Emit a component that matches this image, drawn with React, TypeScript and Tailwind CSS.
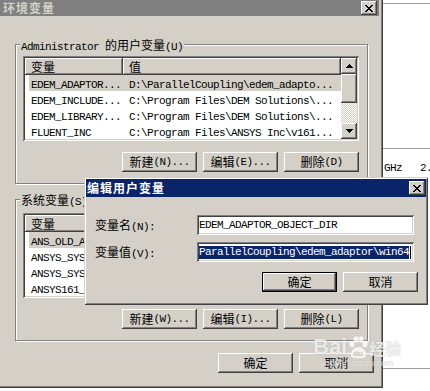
// Windows 2000 "环境变量" dialog with the "编辑用户变量" child dialog on top.
const RAISED = 'shadow-[inset_-1px_-1px_#404040,inset_1px_1px_#ffffff,inset_-2px_-2px_#808080,inset_2px_2px_#d4d0c8]';
const SUNKEN = 'shadow-[inset_1px_1px_#808080,inset_-1px_-1px_#ffffff,inset_2px_2px_#404040,inset_-2px_-2px_#d4d0c8]';
const FRAME = 'shadow-[inset_1px_1px_#d4d0c8,inset_-1px_-1px_#404040,inset_2px_2px_#ffffff,inset_-2px_-2px_#808080]';
const ETCHED = 'border border-[#808080] shadow-[inset_1px_1px_#ffffff,1px_1px_#ffffff]';

const CJK = "font-['Noto_Sans_CJK_SC',sans-serif] text-[12px]";
const MONO = "font-['Liberation_Mono',monospace] text-[11px] tracking-[-0.6px]";

// split into CJK / latin runs so latin gets the narrow 6px cells like SimSun
function T({ s }: { s: string }) {
  const parts = s.match(/[\u3400-\u9fff]+|[^\u3400-\u9fff]+/g) || [];
  return (
    <>
      {parts.map((p, i) =>
        /[\u3400-\u9fff]/.test(p) ? (
          <span key={i} className={CJK}>{p}</span>
        ) : (
          <span key={i} className={`${MONO} whitespace-pre`}>{p}</span>
        )
      )}
    </>
  );
}

function Pixels({ rows }: { rows: string[] }) {
  return (
    <svg width={rows[0].length} height={rows.length} shapeRendering="crispEdges">
      {rows.flatMap((r, y) =>
        [...r].map((c, x) => (c === '1' ? <rect key={`${x}-${y}`} x={x} y={y} width="1" height="1" fill="#000" /> : null))
      )}
    </svg>
  );
}

const X_ROWS = ['11000011', '01100110', '00111100', '00011000', '00111100', '01100110', '11000011'];
const UP_ROWS = ['0001000', '0011100', '0111110', '1111111'];
const DOWN_ROWS = [...UP_ROWS].reverse();

function CloseBtn() {
  return (
    <div className={`w-[16px] h-[14px] bg-[#d4d0c8] ${RAISED} flex items-center justify-center shrink-0`}>
      <Pixels rows={X_ROWS} />
    </div>
  );
}

function Btn({ label, def = false }: { label: string; def?: boolean }) {
  return (
    <div
      className={`w-[75px] h-[20px] bg-[#d4d0c8] flex items-center justify-center leading-[12px] ${RAISED} ${def ? 'border border-black' : ''}`}
    >
      <T s={label} />
    </div>
  );
}

type Row = { a: string; b: string; sel?: boolean };

function ListView({ rows }: { rows: Row[] }) {
  return (
    <div className={`w-[336px] h-[85px] shrink-0 bg-white ${SUNKEN} p-[2px] flex`}>
      <div className="flex-1 flex flex-col overflow-hidden">
        <div className="h-[17px] flex shrink-0 leading-[12px]">
          <div className={`w-[98px] bg-[#d4d0c8] ${RAISED} pl-[6px] flex items-center`}>
            <T s="变量" />
          </div>
          <div className={`flex-1 bg-[#d4d0c8] ${RAISED} pl-[6px] flex items-center`}>
            <T s="值" />
          </div>
        </div>
        {rows.map((r, i) => (
          <div key={i} className="h-[16px] shrink-0 flex pl-[4px]">
            <div className={`flex-1 flex items-center leading-[12px] ${r.sel ? 'bg-[#d4d0c8]' : ''}`}>
              <div className="w-[94px] pl-[2px] overflow-hidden whitespace-pre">
                <T s={r.a} />
              </div>
              <div className="flex-1 pl-[6px] overflow-hidden whitespace-pre">
                <T s={r.b} />
              </div>
            </div>
          </div>
        ))}
      </div>
      <div className="w-[16px] flex flex-col">
        <div className={`h-[16px] shrink-0 bg-[#d4d0c8] ${RAISED} flex items-center justify-center`}>
          <Pixels rows={UP_ROWS} />
        </div>
        <div className={`h-[29px] shrink-0 bg-[#d4d0c8] ${RAISED}`} />
        <div className="flex-1 bg-[image:repeating-conic-gradient(#d4d0c8_0%_25%,#ffffff_0%_50%)] bg-[length:2px_2px]" />
        <div className={`h-[16px] shrink-0 bg-[#d4d0c8] ${RAISED} flex items-center justify-center`}>
          <Pixels rows={DOWN_ROWS} />
        </div>
      </div>
    </div>
  );
}

function Group({ label, cls, rows, btns }: { label: string; cls: string; rows: Row[]; btns: string[] }) {
  return (
    <div className={`relative ml-[15px] w-[353px] ${ETCHED} flex flex-col pl-[7px] pr-[8px] ${cls}`}>
      <span className="absolute left-[4px] -top-[8px] px-[1px] bg-[#d4d0c8] leading-[14px] whitespace-pre">
        <T s={label} />
      </span>
      <ListView rows={rows} />
      <div className="flex justify-end gap-[6px] mt-[11px]">
        {btns.map((b) => (
          <Btn key={b} label={b} />
        ))}
      </div>
    </div>
  );
}

const USER_ROWS: Row[] = [
  { a: 'EDEM_ADAPTOR...', b: 'D:\\ParallelCoupling\\edem_adapto...', sel: true },
  { a: 'EDEM_INCLUDE...', b: 'C:\\Program Files\\DEM Solutions\\...' },
  { a: 'EDEM_LIBRARY...', b: 'C:\\Program Files\\DEM Solutions\\...' },
  { a: 'FLUENT_INC', b: 'C:\\Program Files\\ANSYS Inc\\v161...' },
];

const SYS_ROWS: Row[] = [
  { a: 'ANS_OLD_ANSYSL...', b: '1', sel: true },
  { a: 'ANSYS_SYSDIR', b: 'winx64' },
  { a: 'ANSYS_SYSDIR32', b: 'win32' },
  { a: 'ANSYS161_DIR', b: 'C:\\Program Files\\ANSYS Inc\\v161...' },
];

export default function App() {
  return (
    <div className="w-[430px] h-[391px] bg-white relative overflow-hidden flex items-start text-black">
      {/* main window */}
      <div className="w-[383px] h-[388px] shrink-0 bg-[#d4d0c8] shadow-[inset_-1px_-1px_#404040,inset_-2px_-2px_#808080] flex flex-col">
        <div className="w-[379px] h-[16px] shrink-0 bg-[#808080] flex items-center justify-between pl-[3px] pr-[2px]">
          <span className={`${CJK} font-bold leading-[14px] tracking-[1px] text-[#d4d0c8]`}>环境变量</span>
          <CloseBtn />
        </div>

        <Group
          label="Administrator 的用户变量(U)"
          cls="mt-[28px] h-[140px] pt-[11px]"
          rows={USER_ROWS}
          btns={['新建(N)...', '编辑(E)...', '删除(D)']}
        />
        <Group
          label="系统变量(S)"
          cls="mt-[15px] h-[142px] pt-[13px]"
          rows={SYS_ROWS}
          btns={['新建(W)...', '编辑(I)...', '删除(L)']}
        />

        <div className="flex justify-end gap-[6px] mt-[12px] pr-[9px]">
          <Btn label="确定" />
          <Btn label="取消" />
        </div>
      </div>

      {/* what shows behind, right of the window */}
      <div className="flex-1 flex flex-col">
        <div className="mt-[3px] h-[1px] bg-[#a0a0a0]" />
        <div className="mt-[144px] h-[1px] bg-[#a0a0a0]" />
        <div className={`mt-[13px] pl-[1px] leading-[12px] whitespace-pre ${MONO}`}>GHz   2.</div>
        <div className="mt-[194px] h-[1px] bg-[#a0a0a0]" />
      </div>

      {/* child dialog */}
      <div className={`absolute left-[84px] top-[177px] w-[344px] h-[128px] bg-[#d4d0c8] ${FRAME} p-[2px] flex flex-col`}>
        <div className="h-[18px] shrink-0 bg-[#0a246a] flex items-center justify-between pl-[1px] pr-[1px]">
          <span className={`${CJK} font-bold leading-[14px] tracking-[1px] text-white`}>编辑用户变量</span>
          <CloseBtn />
        </div>
        <div className="flex items-center mt-[18px] pl-[9px]">
          <div className="w-[102px] leading-[12px]">
            <T s="变量名(N):" />
          </div>
          <div className={`w-[217px] h-[20px] bg-white ${SUNKEN} px-[2px] flex items-center leading-[12px] overflow-hidden whitespace-pre`}>
            <span className={MONO}>EDEM_ADAPTOR_OBJECT_DIR</span>
          </div>
        </div>
        <div className="flex items-center mt-[7px] pl-[9px]">
          <div className="w-[102px] leading-[12px]">
            <T s="变量值(V):" />
          </div>
          <div className={`w-[217px] h-[20px] bg-white ${SUNKEN} px-[2px] flex items-center overflow-hidden whitespace-pre`}>
            <span className={`${MONO} leading-[13px] bg-[#0a246a] text-white`}>ParallelCoupling\edem_adaptor\win64</span>
            <span className="w-[1px] h-[13px] bg-black ml-[1px]" />
          </div>
        </div>
        <div className="flex justify-end gap-[6px] mt-[10px] pr-[8px]">
          <Btn label="确定" def />
          <Btn label="取消" />
        </div>
      </div>

      {/* jingyan watermark */}
      <div className="absolute left-[313px] top-[336px] flex flex-col items-center text-white/80 [text-shadow:0_0_1px_rgba(0,0,0,0.3)] pointer-events-none">
        <div className="flex items-end leading-[22px]">
          <span className="font-['Liberation_Sans',sans-serif] font-bold text-[22px]">Bai</span>
          <svg width="22" height="22" viewBox="0 0 22 22" className="opacity-80">
            <ellipse cx="5" cy="8" rx="2.5" ry="3.2" fill="#fff" />
            <ellipse cx="9" cy="3.5" rx="2.5" ry="3.2" fill="#fff" />
            <ellipse cx="14" cy="3.5" rx="2.5" ry="3.2" fill="#fff" />
            <ellipse cx="18" cy="8" rx="2.5" ry="3.2" fill="#fff" />
            <path d="M4 19c0-5 4-8 7.5-8s7.5 3 7.5 8c0 2-2 3-4 3H8c-2 0-4-1-4-3z" fill="#fff" />
            <text x="6" y="20" fontSize="8" fontWeight="bold" fill="#d4d0c8" fontFamily="Liberation Sans, sans-serif">du</text>
          </svg>
          <span className="font-['Noto_Sans_CJK_SC',sans-serif] font-bold text-[16px] leading-[20px]">经验</span>
        </div>
        <span className="font-['Liberation_Sans',sans-serif] text-[9px] leading-[10px]">jingyan.baidu.com</span>
      </div>
    </div>
  );
}
